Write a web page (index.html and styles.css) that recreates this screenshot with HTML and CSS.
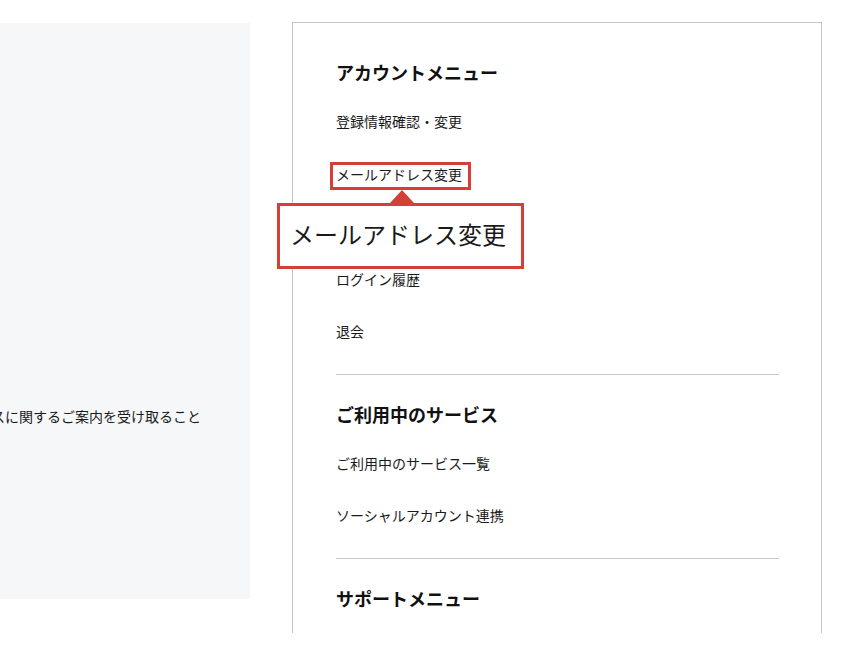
FILE: index.html
```html
<!DOCTYPE html>
<html lang="ja">
<head>
    <meta charset="UTF-8">
    <meta name="viewport" content="width=device-width, initial-scale=1.0">
    <title>アカウントメニュー</title>
    <link rel="stylesheet" href="styles.css">
</head>
<body>
    <div class="page">
        <div class="side-panel">
            <p class="side-text">サービスに関するご案内を受け取ること</p>
        </div>

        <div class="menu-card">
            <div class="menu-section">
                <h2 class="menu-title">アカウントメニュー</h2>
                <a class="menu-item" href="#">登録情報確認・変更</a>
                <a class="menu-item" href="#">メールアドレス変更</a>
                <a class="menu-item" href="#">パスワード変更</a>
                <a class="menu-item" href="#">ログイン履歴</a>
                <a class="menu-item" href="#">退会</a>
            </div>
            <div class="menu-section">
                <h2 class="menu-title">ご利用中のサービス</h2>
                <a class="menu-item" href="#">ご利用中のサービス一覧</a>
                <a class="menu-item" href="#">ソーシャルアカウント連携</a>
            </div>
            <div class="menu-section last">
                <h2 class="menu-title">サポートメニュー</h2>
            </div>
        </div>

        <!-- callout highlighting the target link -->
        <div class="highlight-box"></div>
        <div class="callout-arrow"></div>
        <div class="callout">メールアドレス変更</div>
    </div>
</body>
</html>
```

FILE: styles.css
```css
body {
    margin: 0;
    background-color: #fff;
    font-family: "Noto Sans CJK JP", "Noto Sans", sans-serif;
    color: #1a1a1a;
}
.page {
    position: relative;
    display: flex;
    align-items: flex-start;
    gap: 42px;
    height: 633px;
    overflow: hidden;
}
.side-panel {
    flex: 0 0 250px;
    height: 576px;
    margin-top: 23px;
    background-color: #f6f7f9;
    overflow: hidden;
}
.side-text {
    margin: 381px 0 0 -51px;
    font-size: 14px;
    line-height: 24px;
    white-space: nowrap;
}
.menu-card {
    flex: 0 0 530px;
    margin-top: 22px;
    padding: 9px 42px 0 43px;
    box-sizing: border-box;
    border: 1px solid #c6c6c6;
    height: 700px;
}
.menu-section {
    padding: 26px 0 16px;
    border-bottom: 1px solid #c8c8c8;
}
.menu-section:first-child {
    padding-top: 27px;
}
.menu-section.last {
    border-bottom: none;
}
.menu-title {
    margin: 0 0 10px;
    font-size: 18px;
    font-weight: bold;
    line-height: 26px;
    color: #111;
}
.menu-item {
    display: block;
    padding: 16px 0;
    font-size: 14px;
    line-height: 20.5px;
    color: #1a1a1a;
    text-decoration: none;
}
.highlight-box {
    position: absolute;
    left: 330px;
    top: 162px;
    width: 135px;
    height: 22px;
    border: 3px solid #d43f37;
}
.callout-arrow {
    position: absolute;
    left: 390px;
    top: 190px;
    width: 0;
    height: 0;
    border-left: 12px solid transparent;
    border-right: 12px solid transparent;
    border-bottom: 13px solid #d43f37;
}
.callout {
    position: absolute;
    left: 277px;
    top: 203px;
    width: 231px;
    height: 60px;
    padding-left: 10px;
    border: 3px solid #d43f37;
    background-color: #fff;
    font-size: 24px;
    line-height: 56px;
    color: #1a1a1a;
}
```
